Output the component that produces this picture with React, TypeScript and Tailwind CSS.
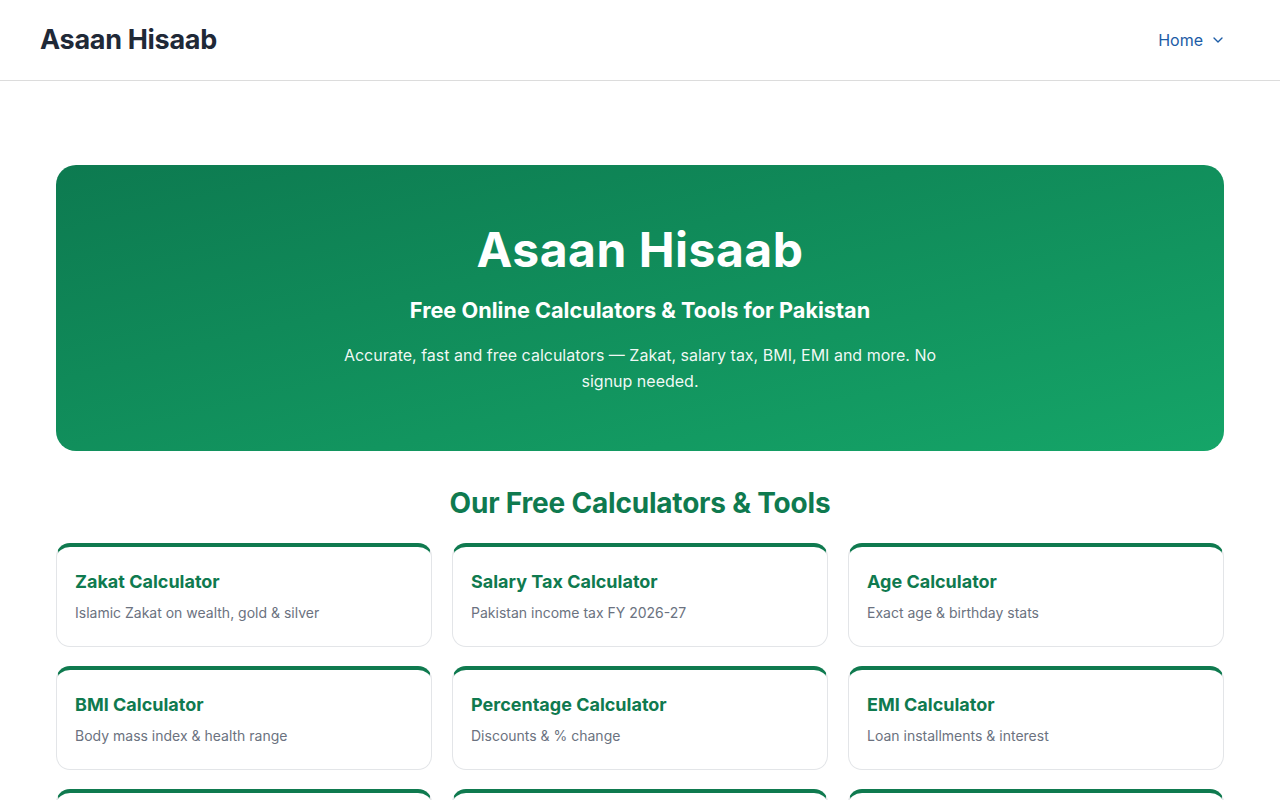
import { ChevronDown } from "lucide-react";

interface Tool {
  title: string;
  desc: string;
}

const tools: Tool[] = [
  { title: "Zakat Calculator", desc: "Islamic Zakat on wealth, gold & silver" },
  { title: "Salary Tax Calculator", desc: "Pakistan income tax FY 2026-27" },
  { title: "Age Calculator", desc: "Exact age & birthday stats" },
  { title: "BMI Calculator", desc: "Body mass index & health range" },
  { title: "Percentage Calculator", desc: "Discounts & % change" },
  { title: "EMI Calculator", desc: "Loan installments & interest" },
  { title: "Loan Calculator", desc: "Monthly payments & total cost" },
  { title: "Unit Converter", desc: "Length, weight & temperature" },
  { title: "Date Calculator", desc: "Days between two dates" },
];

export default function App() {
  return (
    <div className="min-h-screen bg-white font-['Inter','Liberation_Sans',sans-serif] antialiased">
      {/* Header */}
      <header className="h-[81px] border-b border-[#dcdcdc] bg-white">
        <div className="flex h-full items-center justify-between pl-10 pr-[54px]">
          <a href="#" className="text-[27px] font-bold tracking-[-0.3px] text-[#1f2937]">
            Asaan Hisaab
          </a>
          <button className="flex items-center gap-[7px] text-[16px] text-[#1c5ca6]">
            Home
            <ChevronDown className="h-4 w-4" strokeWidth={2} />
          </button>
        </div>
      </header>

      <main className="mx-auto max-w-[1200px] px-4 pt-[84px] pb-10">
        {/* Hero */}
        <section className="rounded-[20px] bg-gradient-to-br from-[#0d7a50] to-[#15a568] px-6 pt-14 pb-[57px] text-center text-white">
          <h1 className="mb-[17px] text-[48px] font-bold leading-[58px] tracking-[0.5px]">
            Asaan Hisaab
          </h1>
          <h2 className="mb-[18px] text-[21.7px] font-bold leading-7">
            Free Online Calculators &amp; Tools for Pakistan
          </h2>
          <p className="mx-auto max-w-[600px] text-[16px] leading-[26px] text-white/95">
            Accurate, fast and free calculators — Zakat, salary tax, BMI, EMI and more. No signup needed.
          </p>
        </section>

        {/* Tools */}
        <h2 className="mt-[34px] mb-[22px] text-center text-[28px] font-bold leading-9 tracking-[-0.2px] text-[#0f7a4f]">
          Our Free Calculators &amp; Tools
        </h2>
        <div className="grid grid-cols-3 gap-x-5 gap-y-[19px]">
          {tools.map((t) => (
            <a
              key={t.title}
              href="#"
              className="block h-[104px] rounded-[14px] border border-[#e3e5e8] border-t-4 border-t-[#0f7a4f] bg-white px-[18px] pt-[21px]"
            >
              <h3 className="mb-[7px] text-[18px] font-bold leading-[27px] text-[#0f7a4f]">
                {t.title}
              </h3>
              <p className="text-[14px] leading-[21px] text-[#6b7280]">{t.desc}</p>
            </a>
          ))}
        </div>
      </main>
    </div>
  );
}
